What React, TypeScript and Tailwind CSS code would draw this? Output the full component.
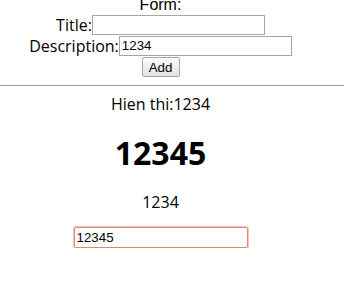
import { useState } from 'react';

export default function App() {
  const [title, setTitle] = useState('');
  const [description, setDescription] = useState('1234');
  const [value, setValue] = useState('12345');

  return (
    <div className="w-[344px] bg-white text-black">
      <div className="w-[321px] flex flex-col items-center -mt-[4px] font-['Open_Sans',sans-serif] text-[16px]">
        <div className="h-[18px] leading-[18px] font-['Liberation_Sans',Arial,sans-serif]">Form:</div>
        <div className="flex items-center h-[21px]">
          <label className="leading-[20px]">Title:</label>
          <input
            value={title}
            onChange={(e) => setTitle(e.target.value)}
            className="w-[173px] h-[20px] border border-[#a6a6a6] px-[2px] text-[13.33px] font-['Liberation_Sans',Arial,sans-serif] outline-none"
          />
        </div>
        <div className="flex items-center h-[21px]">
          <label className="leading-[20px]">Description:</label>
          <input
            value={description}
            onChange={(e) => setDescription(e.target.value)}
            className="w-[173px] h-[20px] border border-[#a6a6a6] px-[2px] text-[13.33px] font-['Liberation_Sans',Arial,sans-serif] outline-none"
          />
        </div>
        <div className="flex items-center h-[21px]">
          <button className="w-[38px] h-[20px] border border-[#a6a6a6] rounded-[2px] bg-gradient-to-b from-[#fbfbfb] to-[#e3e3e3] text-[13.33px] font-['Liberation_Sans',Arial,sans-serif]">
            Add
          </button>
        </div>
      </div>
      <hr className="mt-[8px] border-t border-[#9a9a9a]" />
      <div className="w-[321px] flex flex-col items-center font-['Open_Sans',sans-serif]">
        <p className="mt-[6px] text-[16px] leading-[24px]">Hien thi:{description}</p>
        <h1 className="mt-[17px] text-[32px] leading-[40px] font-bold">{value}</h1>
        <p className="mt-[17px] text-[16px] leading-[24px]">{description}</p>
        <input
          autoFocus
          value={value}
          onChange={(e) => setValue(e.target.value)}
          className="mt-[13px] w-[174px] h-[21px] border border-[#d98b78] rounded-[2px] ring-1 ring-[#f0c4b8] px-[2px] text-[13.33px] font-['Liberation_Sans',Arial,sans-serif] outline-none"
        />
      </div>
    </div>
  );
}
